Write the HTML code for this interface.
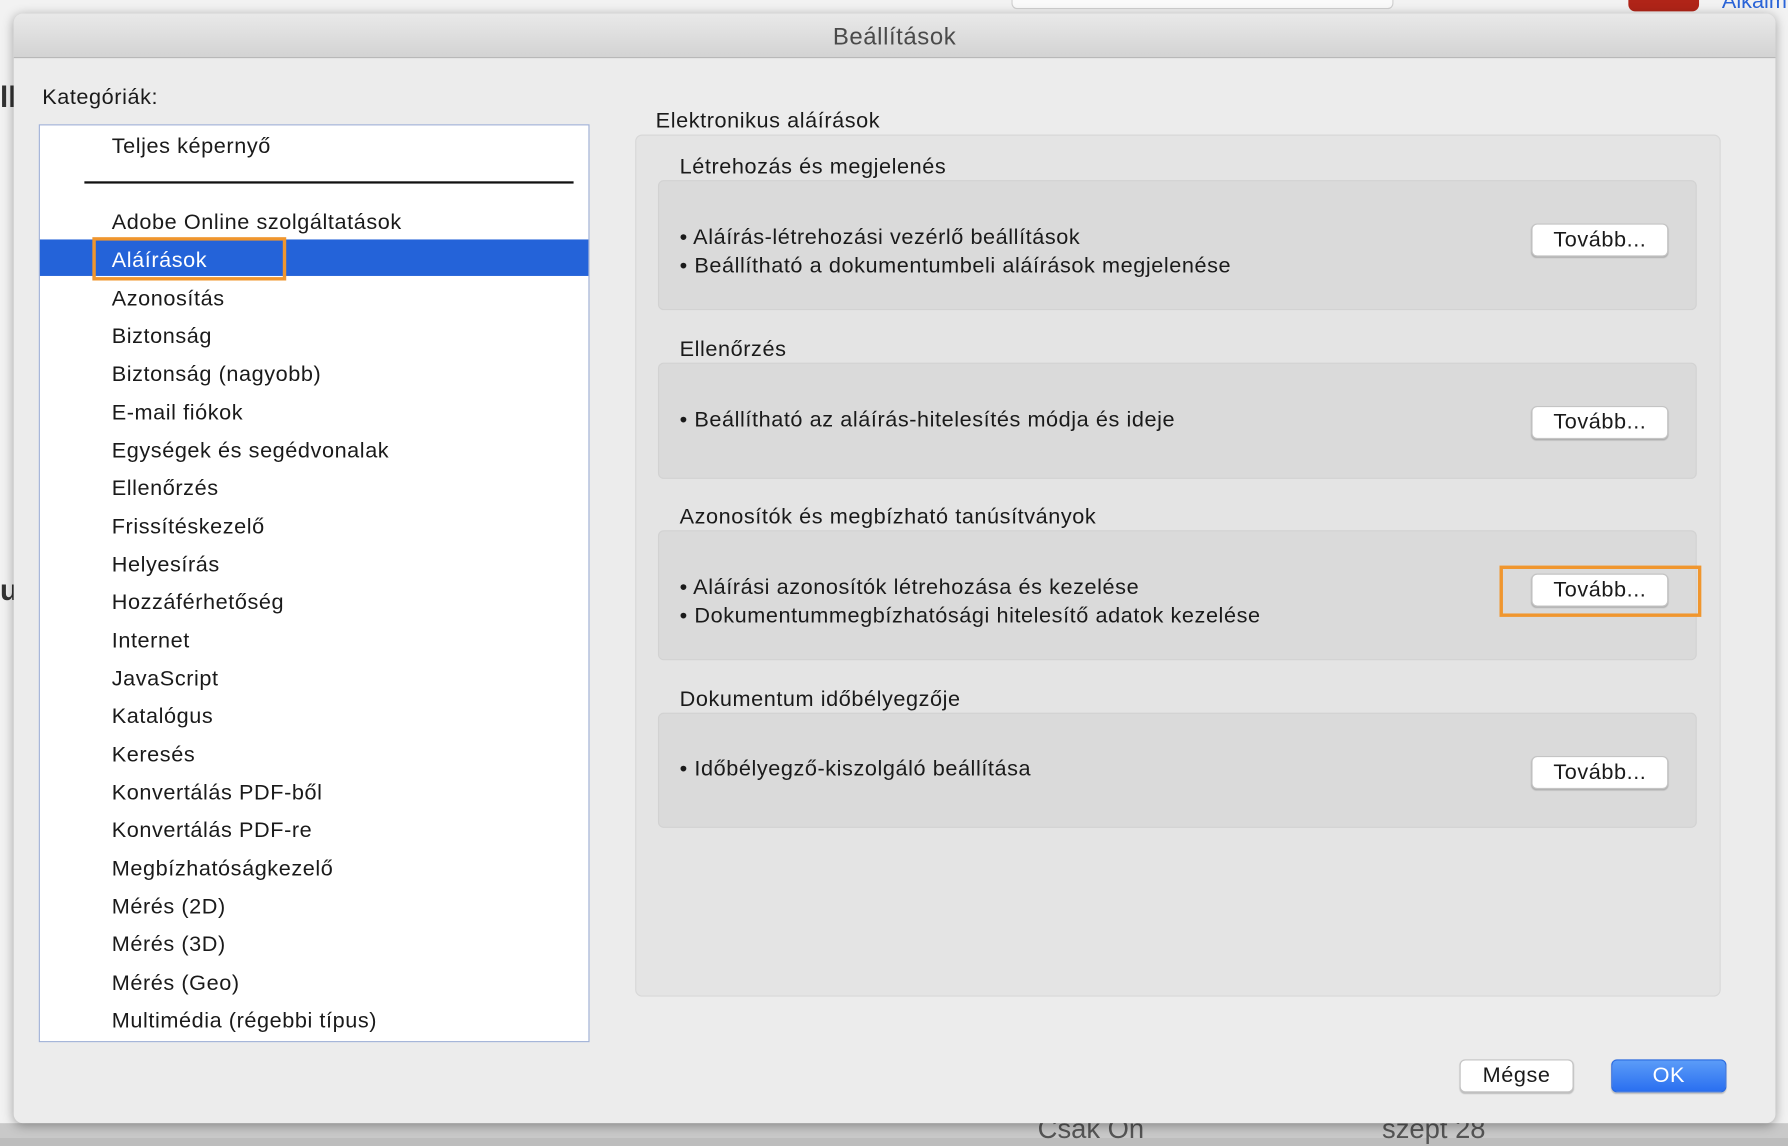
<!DOCTYPE html>
<html><head><meta charset="utf-8"><style>
html,body{margin:0;padding:0;width:1788px;height:1138px;overflow:hidden;background:#bdbdbd;font-family:"Liberation Sans",sans-serif;}
#s{position:absolute;left:0;top:0;width:1568px;height:998px;transform:scale(1.14031,1.14028);transform-origin:0 0;background:#f2f2f2;}
.a{position:absolute;white-space:nowrap;}
.t{font-size:19px;color:#1a1a1a;line-height:22px;letter-spacing:0.5px;}
.btn{position:absolute;background:#fff;border:1px solid #c4c4c4;border-radius:5px;box-shadow:0 1px 1px rgba(0,0,0,.2);font-size:19px;text-align:center;color:#1a1a1a;box-sizing:border-box;letter-spacing:0.5px;}
.hd{position:absolute;left:596px;font-size:19px;color:#1a1a1a;letter-spacing:0.5px;}
.ib{position:absolute;left:577px;width:911px;background:#dadada;border:1px solid #d2d2d2;border-radius:5px;box-sizing:border-box;}
</style></head><body><div id="s">
<div class="a" style="left:0;top:985px;width:1568px;height:13px;background:#c9c9c9"></div>
<div class="a" style="left:910px;top:977px;font-size:24px;color:#555">Csak Ön</div>
<div class="a" style="left:1212px;top:977px;font-size:24px;color:#555">szept 28</div>
<div class="a" style="left:887px;top:-6px;width:333px;height:12px;border:1px solid #d0d0d0;border-radius:5px;background:#fafafa"></div>
<div class="a" style="left:1428px;top:-8px;width:62px;height:18px;border-radius:6px;background:#b02418"></div>
<div class="a" style="left:1510px;top:-9px;font-size:19px;color:#2a64d8">Alkalm</div>
<div class="a" style="left:0;top:70px;font-size:26px;font-weight:bold;color:#333">ll.</div>
<div class="a" style="left:0;top:502px;font-size:26px;font-weight:bold;color:#333">u</div>
<div class="a" style="left:12px;top:12px;width:1545px;height:973px;background:#ececec;border-radius:8px;box-shadow:0 2px 10px rgba(0,0,0,.35);overflow:hidden">
<div class="a" style="left:0;top:0;width:1545px;height:38px;background:linear-gradient(#e9e9e9,#d3d3d3);border-bottom:1px solid #b8b8b8"></div>
<div class="a" style="left:0;top:9px;width:1545px;text-align:center;font-size:21px;color:#4a4a4a;letter-spacing:0.5px">Beállítások</div>
</div>
<div class="a t" style="left:37px;top:75px">Kategóriák:</div>
<div class="a" style="left:34px;top:109px;width:483px;height:805px;background:#fff;border:1px solid #9fb0d6;box-sizing:border-box"></div>
<div class="a" style="left:74px;top:159px;width:429px;height:2px;background:#111"></div>
<div class="a" style="left:35px;top:210px;width:481px;height:32px;background:#2463d9"></div>
<div class="a" style="left:81px;top:208px;width:170px;height:38px;border:3px solid #f0962e;box-sizing:border-box"></div>
<div class="a t" style="left:98px;top:118px">Teljes képernyő</div>
<div class="a t" style="left:98px;line-height:33.33px;top:179px">Adobe Online szolgáltatások<br><span style="color:#fff">Aláírások</span><br>Azonosítás<br>Biztonság<br>Biztonság (nagyobb)<br>E-mail fiókok<br>Egységek és segédvonalak<br>Ellenőrzés<br>Frissítéskezelő<br>Helyesírás<br>Hozzáférhetőség<br>Internet<br>JavaScript<br>Katalógus<br>Keresés<br>Konvertálás PDF-ből<br>Konvertálás PDF-re<br>Megbízhatóságkezelő<br>Mérés (2D)<br>Mérés (3D)<br>Mérés (Geo)<br>Multimédia (régebbi típus)</div>
<div class="a t" style="left:575px;top:96px">Elektronikus aláírások</div>
<div class="a" style="left:557px;top:118px;width:952px;height:756px;background:#e4e4e4;border:1px solid #d8d8d8;border-radius:6px;box-sizing:border-box"></div>
<div class="hd" style="top:136px">Létrehozás és megjelenés</div>
<div class="ib" style="top:158px;height:114px"></div>
<div class="a t" style="left:596px;top:197px;line-height:24.5px">• Aláírás-létrehozási vezérlő beállítások<br>• Beállítható a dokumentumbeli aláírások megjelenése</div>
<div class="btn" style="left:1343px;top:196px;width:120px;height:29px;line-height:28px">Tovább...</div>
<div class="hd" style="top:296px">Ellenőrzés</div>
<div class="ib" style="top:318px;height:102px"></div>
<div class="a t" style="left:596px;top:358px">• Beállítható az aláírás-hitelesítés módja és ideje</div>
<div class="btn" style="left:1343px;top:356px;width:120px;height:29px;line-height:28px">Tovább...</div>
<div class="hd" style="top:443px">Azonosítók és megbízható tanúsítványok</div>
<div class="ib" style="top:465px;height:114px"></div>
<div class="a t" style="left:596px;top:504px;line-height:24.5px">• Aláírási azonosítók létrehozása és kezelése<br>• Dokumentummegbízhatósági hitelesítő adatok kezelése</div>
<div class="btn" style="left:1343px;top:503px;width:120px;height:29px;line-height:28px">Tovább...</div>
<div class="a" style="left:1315px;top:496px;width:177px;height:45px;border:3px solid #f0962e;box-sizing:border-box"></div>
<div class="hd" style="top:603px">Dokumentum időbélyegzője</div>
<div class="ib" style="top:625px;height:101px"></div>
<div class="a t" style="left:596px;top:664px">• Időbélyegző-kiszolgáló beállítása</div>
<div class="btn" style="left:1343px;top:663px;width:120px;height:29px;line-height:28px">Tovább...</div>
<div class="btn" style="left:1280px;top:929px;width:100px;height:29px;line-height:28px">Mégse</div>
<div class="btn" style="left:1413px;top:929px;width:101px;height:29px;line-height:28px;background:linear-gradient(#5b9cf8,#2a6ff0);border-color:#2a6ae0;color:#fff">OK</div>
</div></body></html>
